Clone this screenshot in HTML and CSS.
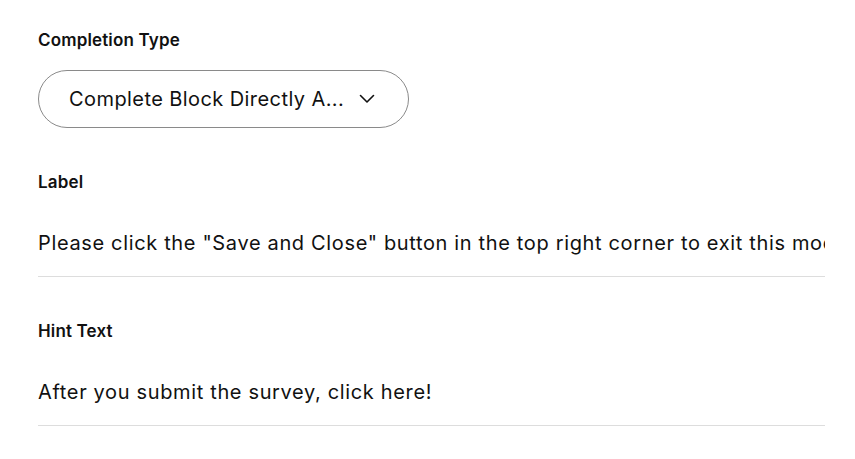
FILE: index.html
```html
<!DOCTYPE html>
<html>
<head>
<meta charset="utf-8">
<link rel="stylesheet" href="styles.css">
</head>
<body>
<div class="form">
  <div class="field">
    <div class="label">Completion Type</div>
    <div class="select">
      <span class="select-text">Complete Block Directly A...</span>
      <svg class="chev" width="16" height="10" viewBox="0 0 16 10"><path d="M1.5 1.5l6.5 6.5 6.5-6.5" fill="none" stroke="#111" stroke-width="1.6" stroke-linecap="round" stroke-linejoin="round"/></svg>
    </div>
  </div>
  <div class="field">
    <div class="label">Label</div>
    <div class="input">Please click the "Save and Close" button in the top right corner to exit this mode and return to the survey.</div>
  </div>
  <div class="field">
    <div class="label">Hint Text</div>
    <div class="input">After you submit the survey, click here!</div>
  </div>
</div>
</body>
</html>
```

FILE: styles.css
```css
html, body {
  margin: 0;
  padding: 0;
  background: #fff;
}
body {
  font-family: Inter, "Noto Sans", sans-serif;
  color: #111;
}
.form {
  padding: 30px 30px 0 38px;
  width: 787px;
  display: flex;
  flex-direction: column;
  gap: 44px;
}
.field {
  display: flex;
  flex-direction: column;
}
.label {
  font-size: 17px;
  font-weight: 600;
  line-height: 20px;
  letter-spacing: 0.15px;
}
.select {
  margin-top: 20px;
  width: 371px;
  height: 58px;
  box-sizing: border-box;
  border: 1px solid #8a8a8a;
  border-radius: 29px;
  display: flex;
  align-items: center;
  padding: 0 31px 0 30px;
  gap: 15px;
}
.select-text {
  font-size: 20px;
  letter-spacing: 0.42px;
  white-space: nowrap;
}
.chev {
  flex-shrink: 0;
}
.input {
  margin-top: 38px;
  font-size: 20px;
  letter-spacing: 0.65px;
  line-height: 26px;
  white-space: nowrap;
  overflow: hidden;
  padding-bottom: 20px;
  border-bottom: 1px solid #ddd;
}
```
